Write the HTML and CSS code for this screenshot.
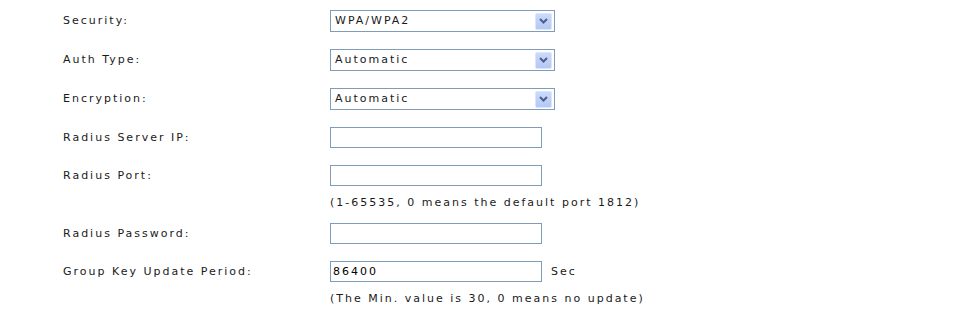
FILE: index.html
```html
<!DOCTYPE html>
<html lang="en">
<head>
  <meta charset="UTF-8" />
  <title>Wireless Security</title>
  <link rel="stylesheet" href="styles.css">
</head>
<body>

<div class="form">
  <div class="row">
    <span class="label sel">Security:</span>
    <div class="select"><span>WPA/WPA2</span><span class="arrow"><svg width="9" height="6" viewBox="0 0 9 6"><path d="M1 1 L4.5 4.5 L8 1" fill="none" stroke="#4d5f86" stroke-width="2"/></svg></span></div>
  </div>
  <div class="row">
    <span class="label sel">Auth Type:</span>
    <div class="select"><span>Automatic</span><span class="arrow"><svg width="9" height="6" viewBox="0 0 9 6"><path d="M1 1 L4.5 4.5 L8 1" fill="none" stroke="#4d5f86" stroke-width="2"/></svg></span></div>
  </div>
  <div class="row">
    <span class="label sel">Encryption:</span>
    <div class="select"><span>Automatic</span><span class="arrow"><svg width="9" height="6" viewBox="0 0 9 6"><path d="M1 1 L4.5 4.5 L8 1" fill="none" stroke="#4d5f86" stroke-width="2"/></svg></span></div>
  </div>
  <div class="row">
    <span class="label">Radius Server IP:</span>
    <div class="field"><input type="text" class="text"></div>
  </div>
  <div class="row">
    <span class="label">Radius Port:</span>
    <div class="field">
      <input type="text" class="text">
      <div class="hint">(1-65535, 0 means the default port 1812)</div>
    </div>
  </div>
  <div class="row tight">
    <span class="label">Radius Password:</span>
    <div class="field"><input type="password" class="text"></div>
  </div>
  <div class="row">
    <span class="label">Group Key Update Period:</span>
    <div class="field">
      <div class="inline"><input type="text" class="text" value="86400"><span class="unit">Sec</span></div>
      <div class="hint">(The Min. value is 30, 0 means no update)</div>
    </div>
  </div>
</div>

</body>
</html>
```

FILE: styles.css
```css
html, body {
  margin: 0;
  padding: 0;
  background: #fff;
  color: #1a1a1a;
  font-family: "DejaVu Sans", Verdana, sans-serif;
  font-size: 11px;
  letter-spacing: 2px;
}

.form {
  padding: 10px 0 0 63px;
  display: flex;
  flex-direction: column;
  gap: 17px;
}

.row {
  display: grid;
  grid-template-columns: 267px auto;
  align-items: start;
}

.row.tight {
  margin-top: -5px;
}

.label {
  line-height: 21px;
}

.label.sel {
  line-height: 22px;
}

.select {
  width: 219px;
  height: 20px;
  border: 1px solid #7f9db9;
  background: #fff;
  display: flex;
  align-items: center;
  justify-content: space-between;
  padding-left: 4px;
}

.select span:first-child {
  line-height: 20px;
}

.arrow {
  width: 15px;
  height: 15px;
  margin-right: 2px;
  border: 1px solid #dce6fb;
  border-radius: 2px;
  background: linear-gradient(#cbdafc, #b4c8f5);
  display: flex;
  align-items: center;
  justify-content: center;
}

.text {
  display: block;
  width: 212px;
  height: 21px;
  box-sizing: border-box;
  margin: 0;
  padding: 1px 2px;
  border: 1px solid #7f9db9;
  font-family: inherit;
  font-size: 11px;
  letter-spacing: 2px;
  color: #000;
  outline: none;
}

.inline {
  display: flex;
  align-items: center;
  gap: 9px;
}

.hint {
  line-height: 16px;
  margin-top: 9px;
}
```
